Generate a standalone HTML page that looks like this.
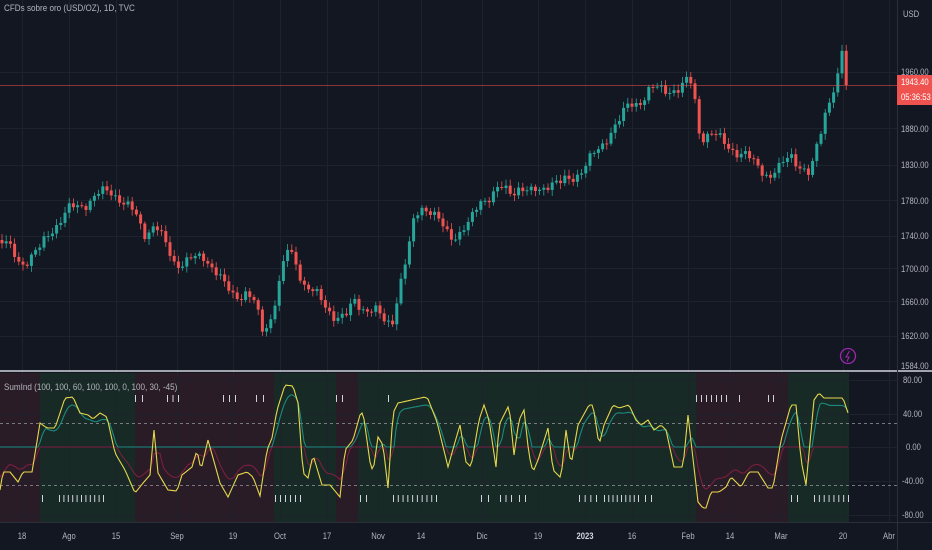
<!DOCTYPE html>
<html><head><meta charset="utf-8"><style>
html,body{margin:0;padding:0;background:#131722;width:932px;height:550px;overflow:hidden}
body{font-family:"Liberation Sans",sans-serif;position:relative}
svg{position:absolute;left:0;top:0}
.t{position:absolute;color:#b2b5be;font-size:9px;white-space:nowrap;transform:scaleX(0.9);transform-origin:left}
.ax{position:absolute;color:#b2b5be;font-size:9px;white-space:nowrap;transform:scaleX(0.85);transform-origin:left}
.tm{position:absolute;top:531px;color:#b2b5be;font-size:9px;white-space:nowrap;transform:translateX(-50%) scaleX(0.85)}
</style></head><body>
<svg id="s" width="932" height="550" xmlns="http://www.w3.org/2000/svg">
<g id="bands"></g>
<g id="grid" stroke="#1e222d" stroke-width="1"></g>
<g id="cand"></g>
<line x1="0" y1="85.5" x2="897" y2="85.5" stroke="#ef5350" stroke-width="0.8" opacity="0.7"/>
<line x1="0" y1="423.5" x2="897" y2="423.5" stroke="#9598a1" stroke-dasharray="3,3" stroke-width="0.8"/>
<line x1="0" y1="485.5" x2="897" y2="485.5" stroke="#9598a1" stroke-dasharray="3,3" stroke-width="0.8"/>
<g id="ind" fill="none" stroke-width="1.1"></g>
<g id="ticks" fill="#d1d4dc"></g>
<line x1="0" y1="371" x2="932" y2="371" stroke="#d1d4dc" stroke-width="1.5"/>
<line x1="897.5" y1="0" x2="897.5" y2="550" stroke="#2a2e39"/>
<line x1="0" y1="522.5" x2="932" y2="522.5" stroke="#2a2e39"/>
<rect x="897" y="75" width="35" height="30" fill="#ef5350"/>
<circle cx="848" cy="356" r="7.5" fill="none" stroke="#9c27b0" stroke-width="1.3"/>
<path d="M849.5 351 L846 357 L849 357 L847 361.5" fill="none" stroke="#9c27b0" stroke-width="1.1"/>
</svg>
<div class="t" style="left:4px;top:3px">CFDs sobre oro (USD/OZ), 1D, TVC</div>
<div class="t" style="left:4px;top:382px">SumInd (100, 100, 60, 100, 100, 0, 100, 30, -45)</div>
<div class="ax" style="left:903px;top:9px">USD</div>
<div class="ax" style="left:901px;top:67px">1960.00</div>
<div class="ax" style="left:901px;top:77px;color:#fff">1943.40</div>
<div class="ax" style="left:901px;top:92px;color:#fff">05:36:53</div>
<div class="ax" style="left:901px;top:124px">1880.00</div>
<div class="ax" style="left:901px;top:160px">1830.00</div>
<div class="ax" style="left:901px;top:196px">1780.00</div>
<div class="ax" style="left:901px;top:231px">1740.00</div>
<div class="ax" style="left:901px;top:264px">1700.00</div>
<div class="ax" style="left:901px;top:297px">1660.00</div>
<div class="ax" style="left:901px;top:331px">1620.00</div>
<div class="ax" style="left:901px;top:361px">1584.00</div>
<div class="ax" style="left:903px;top:375px">80.00</div>
<div class="ax" style="left:903px;top:409px">40.00</div>
<div class="ax" style="left:906px;top:442px">0.00</div>
<div class="ax" style="left:902px;top:476px">-40.00</div>
<div class="ax" style="left:902px;top:510px">-80.00</div>
<div class="tm" style="left:22px">18</div>
<div class="tm" style="left:69px">Ago</div>
<div class="tm" style="left:116px">15</div>
<div class="tm" style="left:177px">Sep</div>
<div class="tm" style="left:233px">19</div>
<div class="tm" style="left:280px">Oct</div>
<div class="tm" style="left:327px">17</div>
<div class="tm" style="left:378px">Nov</div>
<div class="tm" style="left:421px">14</div>
<div class="tm" style="left:482px">Dic</div>
<div class="tm" style="left:538px">19</div>
<div class="tm" style="left:585px;font-weight:bold;color:#d1d4dc">2023</div>
<div class="tm" style="left:632px">16</div>
<div class="tm" style="left:688px">Feb</div>
<div class="tm" style="left:730px">14</div>
<div class="tm" style="left:781px">Mar</div>
<div class="tm" style="left:843px">20</div>
<div class="tm" style="left:889px">Abr</div>
<script>
(function(){
var NS="http://www.w3.org/2000/svg";
function el(p,t,a){var e=document.createElementNS(NS,t);for(var k in a)e.setAttribute(k,a[k]);document.getElementById(p).appendChild(e);return e;}
var R="#2a1c27",G="#182a26";
[[0,40,R],[40,135,G],[135,274,R],[274,336,G],[336,358,R],[358,696,G],[696,788,R],[788,849,G]].forEach(function(b){el("bands","rect",{x:b[0],y:373,width:b[1]-b[0],height:149,fill:b[2]});});
[22,69,116,177,233,280,327,378,421,482,538,585,632,688,730,781,843,889].forEach(function(x){el("grid","line",{x1:x+.5,y1:0,x2:x+.5,y2:522});});
[72,128,165,200,236,268,301,336].forEach(function(y){el("grid","line",{x1:0,y1:y+.5,x2:897,y2:y+.5});});
[380,414,447,481,515].forEach(function(y){el("grid","line",{x1:0,y1:y+.5,x2:897,y2:y+.5});});
function interp(P,x){if(x<=P[0][0])return P[0][1];for(var i=1;i<P.length;i++){if(x<=P[i][0]){var a=P[i-1],b=P[i];return a[1]+(b[1]-a[1])*(x-a[0])/(b[0]-a[0]||1);}}return P[P.length-1][1];}
var C=[[0,240],[10,250],[20,262],[30,258],[40,250],[50,230],[60,220],[70,210],[80,205],[90,200],[100,195],[110,190],[118,195],[125,205],[135,215],[145,232],[155,225],[165,245],[175,262],[185,262],[195,260],[205,255],[215,270],[225,288],[235,295],[245,292],[255,305],[262,330],[270,320],[280,280],[288,250],[295,260],[305,285],[315,295],[325,305],[335,315],[345,320],[355,300],[365,308],[375,312],[385,322],[392,320],[400,285],[408,255],[415,215],[422,205],[430,210],[440,225],[450,235],[460,232],[470,225],[480,200],[490,195],[500,190],[510,192],[520,185],[530,195],[540,190],[550,180],[560,185],[570,180],[580,170],[590,160],[600,150],[610,130],[620,120],[630,105],[640,100],[650,90],[660,90],[670,88],[680,90],[690,80],[695,100],[700,135],[710,135],[720,140],[730,145],[740,155],[750,160],[760,165],[770,178],[780,170],[790,150],[796,160],[805,175],[810,178],[818,140],[825,110],[832,95],[838,80],[842,55],[847,85]];
var prev=interp(C,0);
for(var x=2;x<=848;x+=4.2){
 var c=interp(C,x)+Math.sin(x*1.7)*5+Math.sin(x*0.53)*3;
 if(x>846)c=85;
 var o=prev,up=c<o,col=up?"#26a69a":"#ef5350";
 var tp0=Math.min(o,c),bt0=Math.max(o,c);
 var hi=tp0-2-Math.abs(Math.sin(x*2.3))*4,lo=bt0+2+Math.abs(Math.cos(x*1.9))*4;
 el("cand","line",{x1:x,y1:hi,x2:x,y2:lo,stroke:col,"stroke-width":0.8});
 el("cand","rect",{x:x-1.5,y:tp0,width:3,height:Math.max(1,bt0-tp0),fill:col});
 prev=c;
}
var Y=[[0,490],[3,472],[10,472],[18,482],[23,472],[32,472],[40,423],[47,428],[55,428],[65,398],[73,397],[80,413],[88,415],[93,419],[100,413],[107,417],[115,453],[125,470],[135,493],[143,483],[150,475],[154,430],[158,473],[168,490],[177,491],[182,475],[192,467],[197,450],[201,470],[208,440],[220,483],[228,497],[238,475],[247,472],[253,477],[260,496],[267,450],[272,438],[277,410],[285,385],[293,386],[298,403],[303,473],[308,478],[313,455],[322,485],[330,485],[340,497],[345,450],[353,440],[360,415],[363,412],[370,462],[373,472],[378,437],[383,445],[388,488],[393,413],[398,403],[425,397],[428,399],[437,422],[448,467],[455,442],[460,425],[466,462],[471,467],[479,420],[484,405],[489,420],[496,467],[499,425],[509,405],[514,455],[519,420],[524,410],[529,455],[533,472],[538,460],[548,428],[553,470],[561,478],[566,430],[571,465],[578,425],[589,405],[593,405],[599,445],[604,425],[613,405],[619,408],[629,405],[636,420],[641,425],[648,420],[654,430],[661,425],[666,430],[674,467],[683,467],[688,415],[692,450],[698,502],[703,508],[706,508],[711,492],[719,492],[726,487],[731,477],[741,487],[749,472],[758,472],[768,488],[773,488],[781,440],[791,405],[796,405],[801,460],[806,485],[814,400],[819,393],[824,398],[843,398],[848,413]];
var yp="",tp="",rp="";
for(var x=0;x<=848;x+=2){
 var y=interp(Y,x);
 var s=(interp(Y,x-6)+interp(Y,x-3)+y)/3;
 var t=s<447?447-(447-s)*0.85:447;
 var r=s>447?447+(s-447)*0.7:447;
 yp+=(x?"L":"M")+x+" "+y.toFixed(1);
 tp+=(x?"L":"M")+x+" "+t.toFixed(1);
 rp+=(x?"L":"M")+x+" "+r.toFixed(1);
}
el("ind","path",{d:rp,stroke:"#7a1f3d"});
el("ind","path",{d:tp,stroke:"#1b8a7e"});
el("ind","path",{d:yp,stroke:"#e6d84a"});
function tk(a,b,n,y){for(var i=0;i<n;i++){var x=n>1?a+(b-a)*i/(n-1):a;el("ticks","rect",{x:x,y:y,width:1,height:7});}}
[[135,142,2],[167,178,3],[223,235,3],[256,263,2],[336,342,2],[388,388,1],[696,726,7],[739,739,1],[768,773,2]].forEach(function(g){tk(g[0],g[1],g[2],395);});
[[42,42,1],[59,103,11],[275,300,6],[360,366,2],[393,436,10],[481,488,2],[500,511,3],[519,525,2],[579,596,4],[604,638,9],[645,651,2],[791,797,2],[814,848,8]].forEach(function(g){tk(g[0],g[1],g[2],495);});
})();
</script>
</body></html>
